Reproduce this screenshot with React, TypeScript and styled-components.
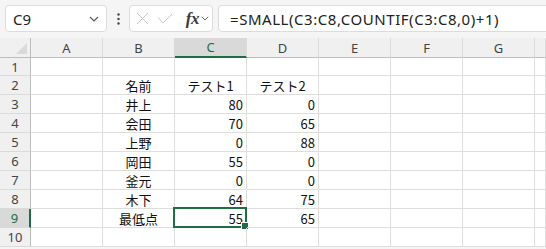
import { type ReactElement } from 'react';
import styled, { createGlobalStyle, css } from 'styled-components';

const GlobalStyle = createGlobalStyle`
  html, body {
    margin: 0;
    padding: 0;
    background: #f5f5f5;
    overflow: hidden;
  }
  * { box-sizing: border-box; }
`;

const Page = styled.div`
  width: 546px;
  height: 249px;
  display: flex;
  flex-direction: column;
  background: #f5f5f5;
  font-family: "Noto Sans", "Noto Sans CJK JP", sans-serif;
`;

const Toolbar = styled.div`
  height: 38px;
  display: flex;
  align-items: flex-start;
  padding: 5px 0 0 5px;
`;

const Box = styled.div`
  height: 27px;
  background: #ffffff;
  border: 1px solid #dcdcdc;
  border-radius: 4px;
  display: flex;
  align-items: center;
`;

const NameBox = styled(Box)`
  width: 102px;
  padding: 0 7px 0 7px;
  justify-content: space-between;
  font-size: 15px;
  color: #222;
`;

const Dots = styled.div`
  width: 22px;
  height: 27px;
  display: flex;
  align-items: center;
  justify-content: center;
`;

const FuncBox = styled(Box)`
  width: 84px;
  padding: 0 3px 0 6px;
  justify-content: space-between;
`;

const FxGroup = styled.span`
  display: flex;
  align-items: center;
  gap: 2px;
`;

const Fx = styled.span`
  font-family: "Liberation Serif", serif;
  font-style: italic;
  font-weight: bold;
  font-size: 17px;
  color: #3a3a3a;
  margin-left: 4px;
  letter-spacing: -0.5px;
`;

const FormulaBar = styled(Box)`
  flex: 1;
  margin-left: 5px;
  margin-right: -10px;
  padding-left: 11px;
  font-size: 15px;
  letter-spacing: 0.55px;
  color: #222;
`;

const Grid = styled.div`
  display: grid;
  grid-template-columns: 31px repeat(7, 72px) 1fr;
  grid-template-rows: 20px 18px repeat(9, 19px);
  background: #ffffff;
  font-family: "Noto Sans CJK JP", sans-serif;
`;

const Corner = styled.div`
  background: #f0f0f0;
  border-right: 1px solid #bdbdbd;
  border-bottom: 1px solid #bdbdbd;
  position: relative;
  &::after {
    content: '';
    position: absolute;
    right: 3px;
    bottom: 3px;
    border-left: 11px solid transparent;
    border-bottom: 11px solid #dadada;
  }
`;

const ColHead = styled.div<{ $sel?: boolean }>`
  background: #f0f0f0;
  border-right: 1px solid #dadada;
  border-bottom: 1px solid #bdbdbd;
  display: flex;
  align-items: center;
  justify-content: center;
  font-family: "Noto Sans", sans-serif;
  font-size: 13px;
  color: #444;
  ${(p) =>
    p.$sel &&
    css`
      background: #d9d9d9;
      color: #1e6e42;
      border-bottom: 2px solid #1e6e42;
    `}
`;

const RowHead = styled.div<{ $sel?: boolean }>`
  background: #f0f0f0;
  border-right: 1px solid #bdbdbd;
  border-bottom: 1px solid #dadada;
  display: flex;
  align-items: center;
  justify-content: center;
  font-family: "Noto Sans", sans-serif;
  font-size: 13px;
  color: #444;
  ${(p) =>
    p.$sel &&
    css`
      background: #d9d9d9;
      color: #1e6e42;
      border-right: 2px solid #1e6e42;
    `}
`;

const Cell = styled.div<{ $align?: 'left' | 'center' | 'right'; $sel?: boolean }>`
  border-right: 1px solid #dedede;
  border-bottom: 1px solid #dedede;
  display: flex;
  align-items: center;
  justify-content: ${(p) =>
    p.$align === 'right' ? 'flex-end' : p.$align === 'center' ? 'center' : 'flex-start'};
  padding: 0 3px;
  font-size: 13px;
  color: #111;
  white-space: nowrap;
  position: relative;
  ${(p) =>
    p.$sel &&
    css`
      &::before {
        content: '';
        position: absolute;
        left: -2px;
        top: -2px;
        right: -1px;
        bottom: -1px;
        border: 2px solid #1e6e42;
        pointer-events: none;
      }
      &::after {
        content: '';
        position: absolute;
        right: -3px;
        bottom: -3px;
        width: 6px;
        height: 6px;
        background: #1e6e42;
        border: 1px solid #fff;
      }
    `}
`;

type Value = string | number | null;

const cols = ['A', 'B', 'C', 'D', 'E', 'F', 'G', ''];

const data: Value[][] = [
  [null, null, null, null],
  [null, '名前', 'テスト1', 'テスト2'],
  [null, '井上', 80, 0],
  [null, '会田', 70, 65],
  [null, '上野', 0, 88],
  [null, '岡田', 55, 0],
  [null, '釜元', 0, 0],
  [null, '木下', 64, 75],
  [null, '最低点', 55, 65],
  [null, null, null, null],
];

function Chevron({ size = 10 }: { size?: number }): ReactElement {
  return (
    <svg width={size} height={size * 0.6} viewBox="0 0 10 6">
      <path d="M1 1 L5 5 L9 1" fill="none" stroke="#555" strokeWidth="1.1" />
    </svg>
  );
}

function Row({ index, row }: { index: number; row: Value[] }): ReactElement {
  return (
    <>
      <RowHead $sel={index === 9}>{index}</RowHead>
      {cols.map((_, ci) => {
        const v = ci < row.length ? row[ci] : null;
        const align = typeof v === 'number' ? 'right' : v ? 'center' : 'left';
        return (
          <Cell key={ci} $align={align} $sel={index === 9 && ci === 2}>
            {v ?? ''}
          </Cell>
        );
      })}
    </>
  );
}

export default function App(): ReactElement {
  return (
    <Page>
      <GlobalStyle />
      <Toolbar>
        <NameBox>
          <span>C9</span>
          <Chevron />
        </NameBox>
        <Dots>
          <svg width="3" height="12" viewBox="0 0 3 12">
            <circle cx="1.5" cy="1.5" r="1.2" fill="#444" />
            <circle cx="1.5" cy="6" r="1.2" fill="#444" />
            <circle cx="1.5" cy="10.5" r="1.2" fill="#444" />
          </svg>
        </Dots>
        <FuncBox>
          <svg width="13" height="13" viewBox="0 0 13 13">
            <path d="M1 1 L12 12 M12 1 L1 12" stroke="#c6c6c6" strokeWidth="1" />
          </svg>
          <svg width="16" height="11" viewBox="0 0 16 11">
            <path d="M1 4.5 L6 10 L15 1" fill="none" stroke="#c6c6c6" strokeWidth="1" />
          </svg>
          <FxGroup>
            <Fx>fx</Fx>
            <Chevron size={8} />
          </FxGroup>
        </FuncBox>
        <FormulaBar>=SMALL(C3:C8,COUNTIF(C3:C8,0)+1)</FormulaBar>
      </Toolbar>
      <Grid>
        <Corner />
        {cols.map((c, i) => (
          <ColHead key={i} $sel={c === 'C'}>
            {c}
          </ColHead>
        ))}
        {data.map((row, r) => (
          <Row key={r} index={r + 1} row={row} />
        ))}
      </Grid>
    </Page>
  );
}
